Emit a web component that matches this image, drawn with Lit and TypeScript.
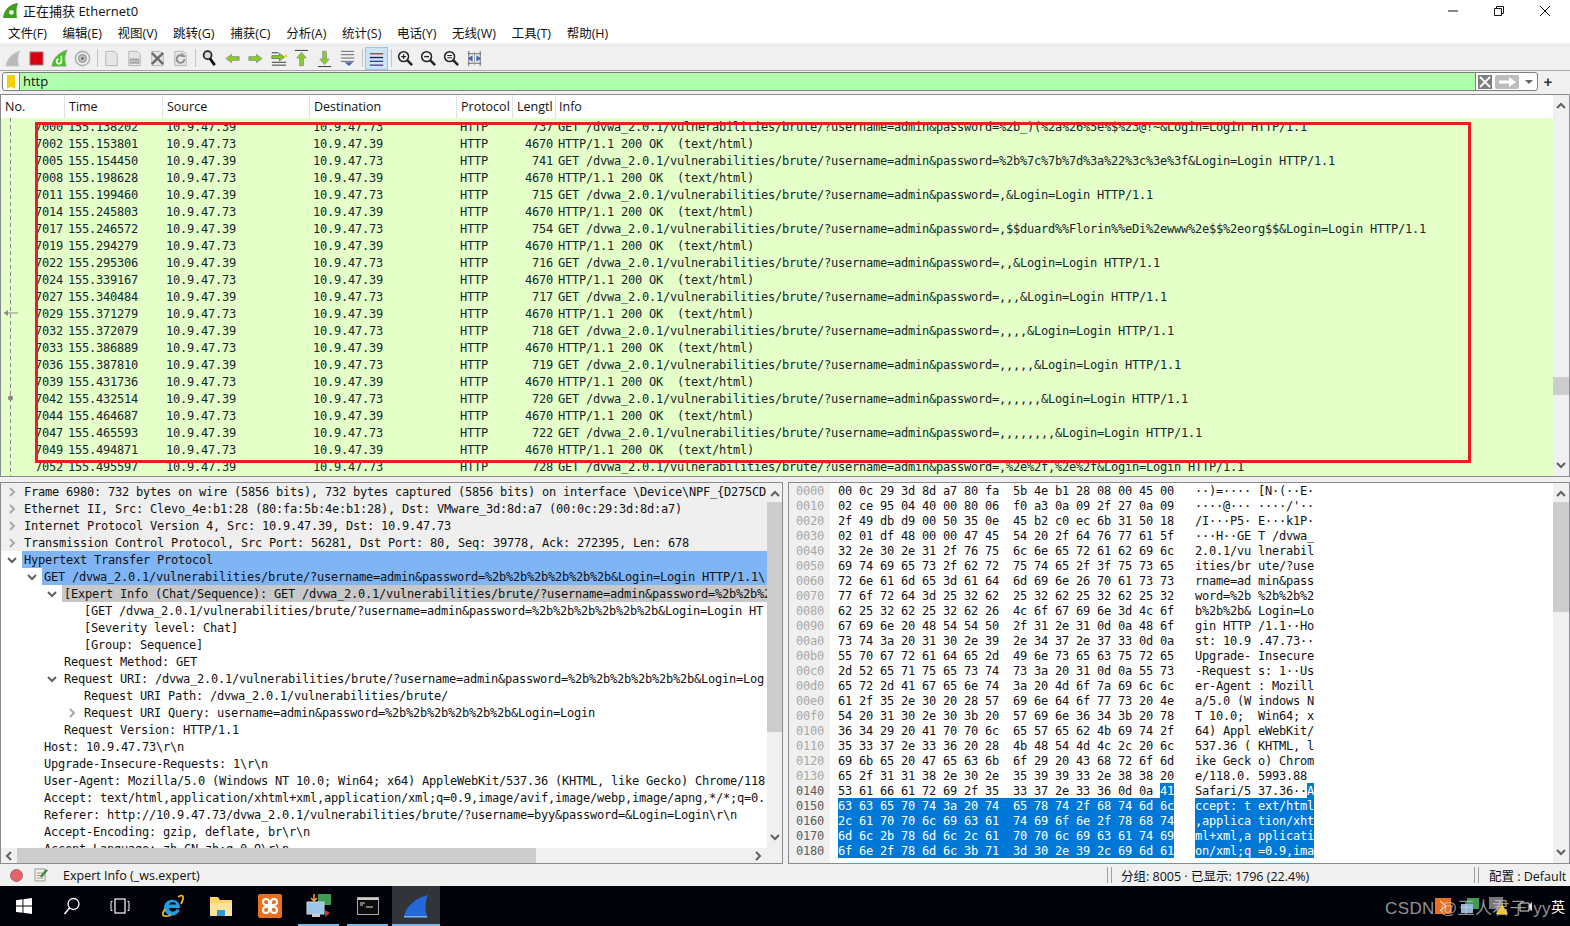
import { css, html, svg, LitElement } from 'lit'
import { customElement } from 'lit/decorators.js'
import { classMap } from 'lit/directives/class-map.js'

const BASE = 'GET /dvwa_2.0.1/vulnerabilities/brute/?username=admin&password='
const TAIL = '&Login=Login HTTP/1.1'
const OK = 'HTTP/1.1 200 OK  (text/html)'
const PLUS = '%2b%2b%2b%2b%2b%2b'

const packets: [string, string, string][] = [
   ['7000', '155.138202', '737'],
   ['7002', '155.153801', '4670'],
   ['7005', '155.154450', '741'],
   ['7008', '155.198628', '4670'],
   ['7011', '155.199460', '715'],
   ['7014', '155.245803', '4670'],
   ['7017', '155.246572', '754'],
   ['7019', '155.294279', '4670'],
   ['7022', '155.295306', '716'],
   ['7024', '155.339167', '4670'],
   ['7027', '155.340484', '717'],
   ['7029', '155.371279', '4670'],
   ['7032', '155.372079', '718'],
   ['7033', '155.386889', '4670'],
   ['7036', '155.387810', '719'],
   ['7039', '155.431736', '4670'],
   ['7042', '155.432514', '720'],
   ['7044', '155.464687', '4670'],
   ['7047', '155.465593', '722'],
   ['7049', '155.494871', '4670'],
   ['7052', '155.495597', '728'],
]

const passwords = [
   '%2b_)(%2a%26%5e%$%23@!~',
   '%2b%7c%7b%7d%3a%22%3c%3e%3f',
   ',',
   ',$$duard%%Florin%%eDi%2ewww%2e$$%2eorg$$',
   ',,',
   ',,,',
   ',,,,',
   ',,,,,',
   ',,,,,,',
   ',,,,,,,,',
   ',%2e%2f,%2e%2f',
]

type TreeRow = { level: number, text: string, arrow?: 'right' | 'down', kind?: 'hint' | 'sel' | 'related' }

const tree: TreeRow[] = [
   { level: 0, arrow: 'right', kind: 'hint', text: 'Frame 6980: 732 bytes on wire (5856 bits), 732 bytes captured (5856 bits) on interface \\Device\\NPF_{D275CD' },
   { level: 0, arrow: 'right', kind: 'hint', text: 'Ethernet II, Src: Clevo_4e:b1:28 (80:fa:5b:4e:b1:28), Dst: VMware_3d:8d:a7 (00:0c:29:3d:8d:a7)' },
   { level: 0, arrow: 'right', kind: 'hint', text: 'Internet Protocol Version 4, Src: 10.9.47.39, Dst: 10.9.47.73' },
   { level: 0, arrow: 'right', kind: 'hint', text: 'Transmission Control Protocol, Src Port: 56281, Dst Port: 80, Seq: 39778, Ack: 272395, Len: 678' },
   { level: 0, arrow: 'down', kind: 'sel', text: 'Hypertext Transfer Protocol' },
   { level: 1, arrow: 'down', kind: 'sel', text: `${BASE}${PLUS}${TAIL}\\` },
   { level: 2, arrow: 'down', kind: 'related', text: `[Expert Info (Chat/Sequence): ${BASE}%2b%2b%2b%` },
   { level: 3, text: `[${BASE}${PLUS}&Login=Login HT` },
   { level: 3, text: '[Severity level: Chat]' },
   { level: 3, text: '[Group: Sequence]' },
   { level: 2, text: 'Request Method: GET' },
   { level: 2, arrow: 'down', text: `Request URI: /dvwa_2.0.1/vulnerabilities/brute/?username=admin&password=${PLUS}&Login=Log` },
   { level: 3, text: 'Request URI Path: /dvwa_2.0.1/vulnerabilities/brute/' },
   { level: 3, arrow: 'right', text: `Request URI Query: username=admin&password=${PLUS}&Login=Login` },
   { level: 2, text: 'Request Version: HTTP/1.1' },
   { level: 1, text: 'Host: 10.9.47.73\\r\\n' },
   { level: 1, text: 'Upgrade-Insecure-Requests: 1\\r\\n' },
   { level: 1, text: 'User-Agent: Mozilla/5.0 (Windows NT 10.0; Win64; x64) AppleWebKit/537.36 (KHTML, like Gecko) Chrome/118' },
   { level: 1, text: 'Accept: text/html,application/xhtml+xml,application/xml;q=0.9,image/avif,image/webp,image/apng,*/*;q=0.' },
   { level: 1, text: 'Referer: http://10.9.47.73/dvwa_2.0.1/vulnerabilities/brute/?username=byy&password=&Login=Login\\r\\n' },
   { level: 1, text: 'Accept-Encoding: gzip, deflate, br\\r\\n' },
   { level: 1, text: 'Accept-Language: zh-CN,zh;q=0.9\\r\\n' },
]

const bytes = [
   '00 0c 29 3d 8d a7 80 fa 5b 4e b1 28 08 00 45 00',
   '02 ce 95 04 40 00 80 06 f0 a3 0a 09 2f 27 0a 09',
   '2f 49 db d9 00 50 35 0e 45 b2 c0 ec 6b 31 50 18',
   '02 01 df 48 00 00 47 45 54 20 2f 64 76 77 61 5f',
   '32 2e 30 2e 31 2f 76 75 6c 6e 65 72 61 62 69 6c',
   '69 74 69 65 73 2f 62 72 75 74 65 2f 3f 75 73 65',
   '72 6e 61 6d 65 3d 61 64 6d 69 6e 26 70 61 73 73',
   '77 6f 72 64 3d 25 32 62 25 32 62 25 32 62 25 32',
   '62 25 32 62 25 32 62 26 4c 6f 67 69 6e 3d 4c 6f',
   '67 69 6e 20 48 54 54 50 2f 31 2e 31 0d 0a 48 6f',
   '73 74 3a 20 31 30 2e 39 2e 34 37 2e 37 33 0d 0a',
   '55 70 67 72 61 64 65 2d 49 6e 73 65 63 75 72 65',
   '2d 52 65 71 75 65 73 74 73 3a 20 31 0d 0a 55 73',
   '65 72 2d 41 67 65 6e 74 3a 20 4d 6f 7a 69 6c 6c',
   '61 2f 35 2e 30 20 28 57 69 6e 64 6f 77 73 20 4e',
   '54 20 31 30 2e 30 3b 20 57 69 6e 36 34 3b 20 78',
   '36 34 29 20 41 70 70 6c 65 57 65 62 4b 69 74 2f',
   '35 33 37 2e 33 36 20 28 4b 48 54 4d 4c 2c 20 6c',
   '69 6b 65 20 47 65 63 6b 6f 29 20 43 68 72 6f 6d',
   '65 2f 31 31 38 2e 30 2e 35 39 39 33 2e 38 38 20',
   '53 61 66 61 72 69 2f 35 33 37 2e 33 36 0d 0a 41',
   '63 63 65 70 74 3a 20 74 65 78 74 2f 68 74 6d 6c',
   '2c 61 70 70 6c 69 63 61 74 69 6f 6e 2f 78 68 74',
   '6d 6c 2b 78 6d 6c 2c 61 70 70 6c 69 63 61 74 69',
   '6f 6e 2f 78 6d 6c 3b 71 3d 30 2e 39 2c 69 6d 61',
]

const SEL_START = 20

//Functions to generate markup
const hexText = (line: string) => `${line.slice(0, 23)}  ${line.slice(24)}`

const asciiText = (line: string) => {
   const chars = line.split(' ').map(b => {
      const code = parseInt(b, 16)
      return code >= 32 && code < 127 ? String.fromCharCode(code) : '·'
   })
   return `${chars.slice(0, 8).join('')} ${chars.slice(8).join('')}`
}

const chevron = (dir: string) => {
   const d: Record<string, string> = {
      right: 'M3 1l4 4-4 4',
      left: 'M7 1L3 5l4 4',
      down: 'M1 3l4 4 4-4',
      up: 'M1 7l4-4 4 4',
   }
   return html`<svg class="chev" viewBox="0 0 10 10"><path d=${d[dir]} fill="none" stroke="currentColor" stroke-width="2"/></svg>`
}

const ic = (body: unknown) => html`<span class="tool">${body}</span>`

const doc = (inner: unknown) => html`<svg class="ico" viewBox="0 0 20 20"><path d="M4 2.500h9l3 3v12H4z" fill="#e6e6e6" stroke="#b4b4b4"/>${inner}</svg>`

const magnifier = (inner: unknown) => html`<svg class="ico" viewBox="0 0 20 20"><circle cx="8" cy="8" r="5.200" fill="#f4f4f4" stroke="#222" stroke-width="1.600"/><path d="M12 12l5 5" stroke="#222" stroke-width="2.600"/>${inner}</svg>`

const green = '#86cf1e'
const line = '#9a9a9a'

const toolbar = [
   ic(html`<svg class="ico" viewBox="0 0 20 20"><path d="M2 18C3 10 9 4 17 2c-3 5-3 11-1 16z" fill="#b9b9b9" stroke="#cfcfcf"/></svg>`),
   ic(html`<svg class="ico" viewBox="0 0 20 20"><rect x="3" y="3" width="14" height="14" fill="#d8000f" stroke="#a9a9a9"/></svg>`),
   ic(html`<svg class="ico" viewBox="0 0 20 20"><path d="M2 18C3 10 9 4 18 1c-3 6-3 11-1 17z" fill="#3bc917" stroke="#9a9a9a"/><path d="M12 7v6a2.500 2.500 0 1 1-3-2.400" fill="none" stroke="#fff" stroke-width="1.800"/></svg>`),
   ic(html`<svg class="ico" viewBox="0 0 20 20"><circle cx="10" cy="10" r="7.500" fill="#ececec" stroke="#b0b0b0" stroke-width="1.600"/><circle cx="10" cy="10" r="4.200" fill="#bdbdbd" stroke="#8c8c8c"/><circle cx="10" cy="10" r="1.500" fill="#707070"/></svg>`),
   null,
   ic(doc('')),
   ic(doc(svg`<rect x="5" y="10" width="10" height="5.500" fill="#a5a5a5"/><path d="M6 12.800h8" stroke="#eee" stroke-dasharray="2 1"/>`)),
   ic(doc(svg`<path d="M4 4l12 12M16 4L4 16" stroke="#6c6c6c" stroke-width="2.600"/>`)),
   ic(doc(svg`<path d="M14 10.500a4 4 0 1 1-2-3.400M12 4.500v3h3" fill="none" stroke="#8c8c8c" stroke-width="2"/>`)),
   null,
   ic(html`<svg class="ico" viewBox="0 0 20 20"><circle cx="8" cy="6.500" r="4.200" fill="#d8d8d8" stroke="#222" stroke-width="1.800"/><path d="M10.500 10l5 7" stroke="#111" stroke-width="3"/></svg>`),
   ic(html`<svg class="ico" viewBox="0 0 20 20"><path d="M3 10l6-4.500V8h8v4H9v2.500z" fill=${green} stroke=${line}/></svg>`),
   ic(html`<svg class="ico" viewBox="0 0 20 20"><path d="M17 10l-6-4.500V8H3v4h8v2.500z" fill=${green} stroke=${line}/></svg>`),
   ic(html`<svg class="ico" viewBox="0 0 20 20"><path d="M3 7h8V4.500l5 4-5 4V10H3z" fill=${green} stroke="#777"/><path d="M3 14h15M3 17h15M3 4h7" stroke="#333"/><rect x="16" y="6" width="3" height="3" fill="#f3d34a"/></svg>`),
   ic(html`<svg class="ico" viewBox="0 0 20 20"><path d="M3 1.500h14" stroke="#333"/><path d="M10 3.500l5 6h-3v8H8v-8H5z" fill=${green} stroke=${line}/></svg>`),
   ic(html`<svg class="ico" viewBox="0 0 20 20"><path d="M3 18.500h14" stroke="#333"/><path d="M10 16.500l5-6h-3v-8H8v8H5z" fill=${green} stroke=${line}/></svg>`),
   ic(html`<svg class="ico" viewBox="0 0 20 20"><path d="M3 2.500h14M3 6h14M3 9.500h14M3 13h14" stroke="#666"/><path d="M7 14h9l-4.500 4z" fill="#3a6ab0"/></svg>`),
   null,
   html`<span class="tool on"><svg class="ico" viewBox="0 0 20 20"><path d="M3 5h14" stroke="#d9212c" stroke-width="1.400"/><path d="M3 9h14" stroke="#222" stroke-width="1.400"/><path d="M3 13h14" stroke="#2d3fa8" stroke-width="1.400"/><path d="M3 17h14" stroke="#6d2f8e" stroke-width="1.400"/></svg></span>`,
   null,
   ic(magnifier(svg`<path d="M5.500 8h5M8 5.500v5" stroke="#222" stroke-width="1.300"/>`)),
   ic(magnifier(svg`<path d="M5.500 8h5" stroke="#222" stroke-width="1.500"/>`)),
   ic(magnifier(svg`<path d="M5.500 6.800h5M5.500 9.200h5" stroke="#222" stroke-width="1.100"/>`)),
   ic(html`<svg class="ico" viewBox="0 0 20 20"><path d="M4 2v16M16 2v16M3 5h14M3 15h14" stroke="#666"/><path d="M3 10l5-3.500v7zM17 10l-5-3.500v7z" fill="#3a6ab0"/><path d="M10 3v14" stroke="#999"/></svg>`),
]

const menus = ['文件(F)', '编辑(E)', '视图(V)', '跳转(G)', '捕获(C)', '分析(A)', '统计(S)', '电话(Y)', '无线(W)', '工具(T)', '帮助(H)']

const taskIcons = [
   { body: html`<svg width="16" height="16" viewBox="0 0 16 16"><path d="M0 2.200l6.500-.9v6.300H0zM7.400 1.200L16 0v7.600H7.400zM0 8.500h6.500v6.300L0 13.900zM7.400 8.500H16V16l-8.600-1.200z" fill="#fff"/></svg>` },
   { body: html`<svg width="18" height="18" viewBox="0 0 18 18"><circle cx="10.500" cy="7" r="5.500" fill="none" stroke="#fff" stroke-width="1.300"/><path d="M6.500 11L1.500 17" stroke="#fff" stroke-width="1.500"/></svg>` },
   { body: html`<svg width="20" height="16" viewBox="0 0 20 16"><rect x="5" y="1" width="10" height="14" fill="none" stroke="#fff" stroke-width="1.200"/><path d="M2.500 3.500H1v9h1.500M17.500 3.500H19v9h-1.500" fill="none" stroke="#fff"/></svg>` },
   { gap: true, body: html`<svg width="26" height="26" viewBox="0 0 26 26"><path d="M21 15H10a4 4 0 0 0 7.500 1.500h3.300A8 8 0 1 1 21 15zM10 11.500h7.500a4 4 0 0 0-7.500 0z" fill="#1ea0e8" fill-rule="evenodd"/><path d="M19 4c5-3 7-1 3 7M6 16c-4 6-3 9 6 6" fill="none" stroke="#f2b81f" stroke-width="1.800"/></svg>` },
   { wide: true, body: html`<svg width="24" height="22" viewBox="0 0 24 22"><path d="M1 2h8l2 3h12v16H1z" fill="#fbd36b"/><rect x="1" y="8" width="22" height="13" fill="#fde29b"/><rect x="8" y="15" width="8" height="6" fill="#2a9ae0"/></svg>` },
   { wide: true, body: html`<svg width="24" height="24" viewBox="0 0 24 24"><rect width="24" height="24" rx="2" fill="#e8701f"/><path d="M8 5a3 3 0 0 0 0 6h8a3 3 0 0 0 0-6 3 3 0 0 0-3 3v8a3 3 0 0 0 3 3 3 3 0 0 0 0-6H8a3 3 0 0 0 0 6 3 3 0 0 0 3-3V8a3 3 0 0 0-3-3z" fill="none" stroke="#fff" stroke-width="2"/></svg>` },
   { wide: true, body: html`<svg width="26" height="26" viewBox="0 0 26 26"><rect x="12" y="1" width="13" height="11" fill="#3f9b56"/><rect x="1" y="9" width="17" height="12" fill="#9cc7e8" stroke="#cfd8e0"/><rect x="6" y="21" width="8" height="3" fill="#ccc"/><path d="M8 1v7M5 5l3 3 3-3" stroke="#f0a030" stroke-width="1.600" fill="none"/><path d="M19 17l5 3-5 4z" fill="#c03a3a"/></svg>`, open: true },
   { wide: true, body: html`<svg width="22" height="18" viewBox="0 0 22 18"><rect x=".5" y=".5" width="21" height="17" fill="#0c0c0c" stroke="#aaa"/><rect x="1" y="1" width="20" height="2" fill="#ccc"/><path d="M3 6h5M3 8h3M9 10h7" stroke="#ddd"/></svg>`, open: true },
   { active: true, body: html`<svg width="26" height="26" viewBox="0 0 26 26"><path d="M1 23C3 14 12 5 25 2c-3 7-3 14-1 21z" fill="#2367d8"/><path d="M1 23h23l.5 1.500H1z" fill="#7fb2f0"/></svg>` },
]

@customElement('app-root')
export class AppRoot extends LitElement {

   render() {
      return html`
         <div class="title">
            <svg class="logo" viewBox="0 0 16 16"><path d="M0 16C1 7 7 1 16 0c-2 5-2 11-1 16z" fill="#3f9e22"/><circle cx="9" cy="10" r="2.600" fill="#dff3d2"/></svg>
            <span>正在捕获 Ethernet0</span>
            <span class="win">
               <svg viewBox="0 0 12 12"><path d="M1 6h10" stroke="#111" fill="none"/></svg>
               <svg viewBox="0 0 12 12"><path d="M1.500 3.500h7v7h-7zM3.500 3.500v-2h7v7h-2" stroke="#111" fill="none"/></svg>
               <svg viewBox="0 0 12 12"><path d="M1 1l10 10M11 1L1 11" stroke="#111" fill="none"/></svg>
            </span>
         </div>
         <div class="menu">${menus.map(m => html`<span>${m}</span>`)}</div>
         <div class="toolbar">${toolbar.map(t => t === null ? html`<i class="sep"></i>` : t)}</div>
         <div class="filter-row">
            <div class="filter">
               <span class="mark"><svg width="8" height="14" viewBox="0 0 8 14"><path d="M0 0h8v14l-4-2.500L0 14z" fill="#f2d100"/></svg></span>
               <span class="expr">http</span>
               <span class="fbtn x"><svg viewBox="0 0 14 14"><rect width="14" height="14" fill="#7d7d7d"/><path d="M2 2l10 10M12 2L2 12" stroke="#fff" stroke-width="1.800"/></svg></span>
               <span class="fbtn go"><svg viewBox="0 0 24 14"><rect width="24" height="14" rx="2" fill="#bdbdbd"/><path d="M4 5.500h10V2l7 5-7 5V8.500H4z" fill="#fff"/></svg></span>
               <span class="drop"></span>
            </div>
            <span class="plus">+</span>
         </div>
         ${this.renderList()}
         <div class="split"></div>
         <div class="lower">
            ${this.renderTree()}
            <div class="lower-gap"></div>
            ${this.renderBytes()}
         </div>
         <div class="status">
            <span class="led"></span>
            <svg class="note" viewBox="0 0 16 16"><path d="M2 2h10v12H2z" fill="#f4f1e2" stroke="#999"/><path d="M4 6h6M4 8.500h6M4 11h6" stroke="#999"/><path d="M7 9l6-7 2 1.500-6 7z" fill="#3e8e3e"/></svg>
            <span class="st-expert">Expert Info (_ws.expert)</span>
            <i class="grip"></i>
            <span class="st-count">分组: 8005 · 已显示: 1796 (22.4%)</span>
            <i class="grip"></i>
            <span class="st-prof">配置 : Default</span>
         </div>
         <div class="taskbar">
            ${taskIcons.map(t => html`<span class=${classMap({ task: true, gap: !!t.gap, wide: !!t.gap || !!t.wide, open: !!t.open, active: !!t.active })}>${t.body}</span>`)}
            <span class="tray">
               <svg width="16" height="16" viewBox="0 0 16 16"><rect width="16" height="16" fill="#e8701f"/><path d="M5 3l6 5-6 5" fill="none" stroke="#fff"/></svg>
               <svg width="18" height="16" viewBox="0 0 18 16"><rect x="6" width="12" height="11" fill="#3f9b56"/><rect y="6" width="12" height="9" fill="#8fb8d8"/></svg>
               <svg width="20" height="18" viewBox="0 0 20 18"><rect width="14" height="12" fill="#777"/><path d="M13 7l6 10H7z" fill="#f2c21f"/></svg>
               <svg width="14" height="14" viewBox="0 0 14 14"><path d="M1 4h9v8H1z" fill="none" stroke="#ddd"/><path d="M10 6l3-3v9l-3-3" fill="#ddd"/></svg>
            </span>
            <span class="watermark">CSDN @王人君子-yy</span>
            <span class="ime">英</span>
         </div>
      `
   }

   renderList() {
      let pw = 0
      return html`
         <div class="list">
            <div class="list-main">
               <div class="cols head">
                  <span>No.</span><span>Time</span><span>Source</span><span>Destination</span><span>Protocol</span><span>Lengtl</span><span>Info</span>
               </div>
               <div class="rows">
                  ${packets.map(([no, time, len], i) => {
                     const req = i % 2 === 0
                     const info = req ? `${BASE}${passwords[pw++]}${TAIL}` : OK
                     return html`<div class="cols pkt mono">
                        <span class="no">${no}</span>
                        <span>${time}</span>
                        <span>${req ? '10.9.47.39' : '10.9.47.73'}</span>
                        <span>${req ? '10.9.47.73' : '10.9.47.39'}</span>
                        <span>HTTP</span>
                        <span class="len">${len}</span>
                        <span class="info">${info}</span>
                     </div>`
                  })}
                  <svg class="marks" viewBox="0 0 20 358">
                     <path d="M9.500 0v358" stroke="#8a8a8a" stroke-dasharray="4 3"/>
                     <path d="M3 195h14" stroke="#8a8a8a"/>
                     <path d="M3 195l4-3v6z" fill="#8a8a8a"/>
                     <circle cx="9.500" cy="280" r="2.500" fill="#8a8a8a"/>
                  </svg>
               </div>
            </div>
            <div class="vbar list-bar">
               ${chevron('up')}
               <div class="track"><i class="thumb list-thumb"></i></div>
               ${chevron('down')}
            </div>
            <div class="redbox"></div>
         </div>
      `
   }

   renderTree() {
      return html`
         <div class="pane tree">
            <div class="tree-top">
               <div class="tree-rows mono">
                  ${tree.map(r => html`
                     <div class=${classMap({ trow: true, hint: r.kind === 'hint' })}>
                        <span class="gutter" style="width:${21 + r.level * 20}px">
                           ${r.arrow ? html`<span class="arrow ${r.arrow}">${chevron(r.arrow)}</span>` : ''}
                        </span>
                        <span class=${classMap({ ttext: true, sel: r.kind === 'sel', related: r.kind === 'related' })}>${r.text}</span>
                     </div>`)}
               </div>
               <div class="vbar tree-bar">
                  ${chevron('up')}
                  <div class="track"><i class="thumb tree-thumb"></i></div>
                  ${chevron('down')}
               </div>
            </div>
            <div class="hbar">
               <span class="harrow">${chevron('left')}</span>
               <div class="htrack"><i class="hthumb"></i></div>
               <span class="harrow">${chevron('right')}</span>
            </div>
         </div>
      `
   }

   renderBytes() {
      return html`
         <div class="pane bytes">
            <div class="offsets mono">
               ${bytes.map((_, i) => html`<div class=${classMap({ off: true, dark: i >= SEL_START })}>${(i * 16).toString(16).padStart(4, '0')}</div>`)}
            </div>
            <div class="hexes mono">
               ${bytes.map((row, i) => {
                  const hex = hexText(row)
                  if (i < SEL_START) return html`<div class="bline">${hex}</div>`
                  if (i === SEL_START) return html`<div class="bline">${hex.slice(0, 46)}<span class="bsel">${hex.slice(46)}</span></div>`
                  return html`<div class="bline"><span class="bsel">${hex}</span></div>`
               })}
            </div>
            <div class="ascii mono">
               ${bytes.map((row, i) => {
                  const txt = asciiText(row)
                  if (i < SEL_START) return html`<div class="bline">${txt}</div>`
                  if (i === SEL_START) return html`<div class="bline">${txt.slice(0, 16)}<span class="bsel">${txt.slice(16)}</span></div>`
                  return html`<div class="bline"><span class="bsel">${txt}</span></div>`
               })}
            </div>
            <div class="vbar bytes-bar">
               ${chevron('up')}
               <div class="track"><i class="thumb bytes-thumb"></i></div>
               ${chevron('down')}
            </div>
         </div>
      `
   }

   static styles = css`
      :host {
         display: flex;
         flex-direction: column;
         width: 1570px;
         height: 926px;
         overflow: hidden;
         background: #f0f0f0;
         color: #111;
         font: 12.5px "Open Sans", "Noto Sans CJK SC", sans-serif;
      }

      .mono {
         font: 12px "DejaVu Sans Mono", monospace;
         letter-spacing: -0.225px;
      }

      .title {
         height: 21px;
         background: #fff;
         display: flex;
         align-items: center;
         padding-left: 3px;
         font-size: 13px;
      }
      .logo { width: 15px; height: 15px; margin-right: 5px; }
      .win { margin-left: auto; display: flex; gap: 34px; padding-right: 19px; }
      .win svg { width: 12px; height: 12px; }

      .menu {
         height: 22px;
         background: #fff;
         display: flex;
         align-items: center;
         padding-left: 8px;
         gap: 15.7px;
      }
      .toolbar {
         margin-top: 2px;
         border-top: 1px solid #e8e8e8;
         border-bottom: 1px solid #a8a8a8;
         box-sizing: border-box;
         height: 26px;
         display: flex;
         align-items: center;
         padding-left: 2px;
      }
      .tool { width: 23px; height: 23px; display: flex; align-items: center; justify-content: center; box-sizing: border-box; flex: none; }
      .tool.on { background: #cce4f7; border: 1px solid #90c8f6; }
      .ico { width: 19px; height: 19px; }
      .sep { width: 1px; height: 18px; background: #c4c4c4; margin: 0 2.5px; flex: none; }

      .filter-row { height: 23px; display: flex; align-items: center; padding: 0 0 2px 2px; box-sizing: border-box; }
      .filter {
         width: 1536px;
         height: 19px;
         box-sizing: border-box;
         border: 1px solid #7f7f7f;
         border-radius: 3px;
         background: #fff;
         display: flex;
         align-items: center;
      }
      .mark { width: 17px; display: flex; justify-content: center; border-right: 1px solid #7f7f7f; height: 100%; align-items: center; flex: none; box-sizing: border-box; }
      .expr { flex: 1; background: #afffaf; height: 100%; padding-left: 3px; line-height: 16px; font-size: 13px; border-right: 1px solid #7f7f7f; }
      .fbtn { display: flex; }
      .fbtn.x { margin-left: 2px; }
      .fbtn.x svg { width: 14px; height: 14px; }
      .fbtn.go { margin-left: 3px; }
      .fbtn.go svg { width: 24px; height: 14px; }
      .drop { width: 0; height: 0; border: 4px solid transparent; border-top: 4px solid #666; border-bottom: 0; margin: 0 4px 0 6px; }
      .plus { font: bold 15px "Liberation Sans", sans-serif; margin-left: 3px; width: 14px; text-align: center; color: #333; }

      .list {
         position: relative;
         height: 383px;
         box-sizing: border-box;
         border: 1px solid #8a8a8f;
         display: flex;
         flex: none;
      }
      .list-main { flex: 1; min-width: 0; background: #e4ffc7; overflow: hidden; display: flex; flex-direction: column; }
      .cols {
         display: grid;
         grid-template-columns: 64px 98px 147px 147px 56px 43px 1fr;
         height: 17px;
         line-height: 18px;
      }
      .head { background: #fff; height: 23px; line-height: 24px; }
      .head span { border-right: 1px solid #e3e3e3; padding-left: 4px; overflow: hidden; white-space: nowrap; }
      .head span:last-child { border-right: 0; padding-left: 3px; }
      .rows { position: relative; overflow: hidden; flex: 1; }
      .pkt span { padding-left: 3px; color: #12272e; white-space: pre; height: 17px; }
      .pkt .no { text-align: right; padding: 0 2px 0 0; }
      .pkt .len { text-align: right; padding: 0 3px 0 0; }
      .pkt .info { padding-left: 2px; }
      .marks { position: absolute; left: 0; top: 0; width: 20px; height: 358px; }
      .redbox {
         position: absolute;
         left: 34px;
         top: 27px;
         width: 1436px;
         height: 341px;
         box-sizing: border-box;
         border: 3px solid #ed1c24;
         pointer-events: none;
      }

      .vbar { width: 16px; flex: none; background: #f0f0f0; display: flex; flex-direction: column; align-items: center; padding: 6px 0 6px; box-sizing: border-box; }
      .track { flex: 1; width: 100%; position: relative; }
      .thumb { position: absolute; left: 0; right: 0; background: #cdcdcd; }
      .list-thumb { top: 266px; height: 18px; }
      .tree-thumb { top: 3px; height: 230px; }
      .bytes-thumb { top: 3px; height: 110px; }
      .chev { width: 10px; height: 10px; color: #606060; flex: none; }

      .split { height: 5px; flex: none; }
      .lower { display: flex; height: 382px; flex: none; }
      .lower-gap { width: 5px; flex: none; }
      .pane { border: 1px solid #8a8a8f; box-sizing: border-box; background: #fff; height: 100%; overflow: hidden; }

      .tree { width: 783px; display: flex; flex-direction: column; flex: none; }
      .tree-top { flex: 1; display: flex; min-height: 0; }
      .tree-rows { flex: 1; min-width: 0; overflow: hidden; }
      .tree-bar { width: 15px; }
      .trow { display: flex; height: 17px; line-height: 19px; }
      .trow.hint { background: #efefef; }
      .gutter { flex: none; position: relative; }
      .arrow { position: absolute; right: 5px; top: 4px; display: flex; }
      .arrow.right .chev { color: #a8a8a8; }
      .ttext { flex: 1; min-width: 0; overflow: hidden; padding-left: 2px; color: #111; white-space: pre; }
      .ttext.sel { background: #7fb4f5; }
      .ttext.related { background: #c8c8c8; }

      .hbar { height: 15px; flex: none; background: #f0f0f0; display: flex; align-items: center; }
      .harrow { width: 16px; display: flex; justify-content: center; flex: none; }
      .harrow .chev { color: #606060; }
      .htrack { width: 733px; height: 15px; position: relative; }
      .hthumb { position: absolute; left: 0; width: 519px; top: 0; bottom: 0; background: #cdcdcd; }

      .bytes { flex: 1; min-width: 0; display: flex; }
      .offsets { width: 41px; flex: none; background: #f0f0f0; padding-left: 7px; color: #a8a8a8; box-sizing: border-box; }
      .off.dark { color: #5c5c5c; }
      .hexes { margin-left: 8px; width: 337px; flex: none; color: #111; }
      .ascii { margin-left: 20px; width: 120px; flex: none; color: #111; }
      .off, .bline { height: 15px; line-height: 17px; white-space: pre; }
      .bsel { background: #0078d7; color: #fff; display: inline-block; height: 15px; vertical-align: top; }
      .bytes-bar { margin-left: auto; }

      .status { height: 22px; flex: none; display: flex; align-items: center; font-size: 12.5px; box-sizing: border-box; }
      .led { width: 13px; height: 13px; border-radius: 50%; background: #e8606a; border: 1px solid #9a6a6a; margin-left: 10px; box-sizing: border-box; }
      .note { width: 16px; height: 16px; margin-left: 10px; }
      .st-expert { margin-left: 14px; width: 1044px; flex: none; }
      .grip { width: 3px; height: 16px; border-left: 1px solid #a0a0a0; border-right: 1px solid #a0a0a0; flex: none; }
      .st-count { margin-left: 9px; width: 353px; flex: none; }
      .st-prof { margin-left: 10px; white-space: nowrap; }

      .taskbar { height: 40px; flex: none; background: #01020a; display: flex; align-items: stretch; position: relative; }
      .task { width: 48px; display: flex; align-items: center; justify-content: center; position: relative; flex: none; box-sizing: border-box; }
      .task.gap { margin-left: 3px; }
      .task.wide { width: 49px; }
      .task.active { background: #333439; }
      .task.open::after, .task.active::after { content: ''; position: absolute; bottom: 0; height: 2px; left: 4px; right: 4px; background: #76b9ed; }
      .task.active::after { left: 0; right: 0; }
      .tray { margin-left: auto; display: flex; align-items: center; gap: 10px; padding-right: 18px; }
      .ime { color: #fff; font: 14px "Noto Sans CJK SC", sans-serif; align-self: center; padding-right: 5px; }
      .watermark {
         position: absolute;
         left: 1385px;
         top: 8px;
         font: 17px "Liberation Sans", "Noto Sans CJK SC", sans-serif;
         color: rgba(205, 205, 205, 0.72);
         white-space: nowrap;
         letter-spacing: 0.4px;
      }
   `
}

declare global {
   interface HTMLElementTagNameMap {
      'app-root': AppRoot
   }
}
